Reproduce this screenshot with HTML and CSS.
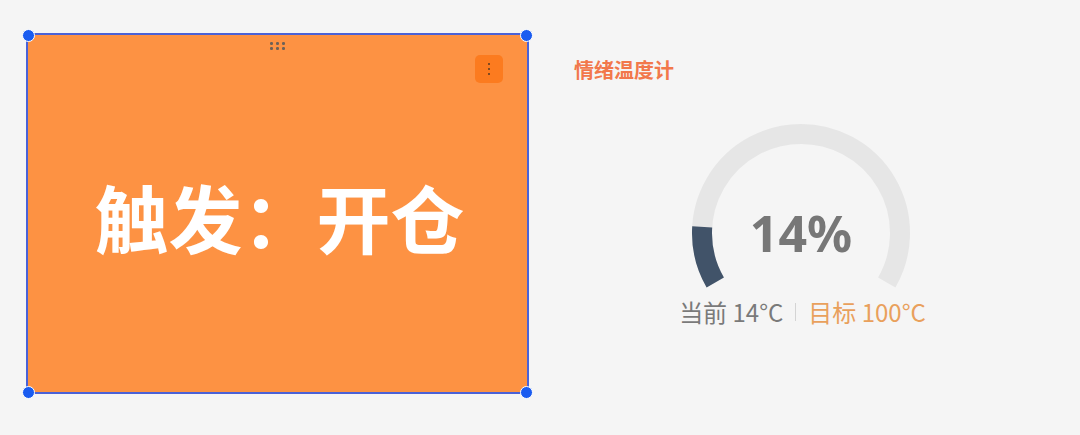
FILE: index.html
```html
<!DOCTYPE html>
<html lang="zh">
<head>
<meta charset="utf-8">
<link rel="stylesheet" href="styles.css">
</head>
<body>
<div class="page">
  <div class="card">
    <div class="drag">
      <i></i><i></i><i></i><i></i><i></i><i></i>
    </div>
    <div class="menu"><i></i><i></i><i></i></div>
    <div class="big">触发：开仓</div>
    <span class="handle tl"></span>
    <span class="handle tr"></span>
    <span class="handle bl"></span>
    <span class="handle br"></span>
  </div>
  <div class="panel">
    <div class="title">情绪温度计</div>
    <div class="gauge">
      <svg class="gauge-svg" width="240" height="185" viewBox="0 0 240 185">
        <path d="M34.26 167.5 A99 99 0 1 1 205.74 167.5" fill="none" stroke="#e6e6e6" stroke-width="20"/>
        <path d="M34.26 167.5 A99 99 0 0 1 21.2 111.8" fill="none" stroke="#415369" stroke-width="20" stroke-linejoin="round"/>
        <text x="120" y="118" class="pct" text-anchor="middle" dominant-baseline="central">14%</text>
      </svg>
      <div class="legend">
        <span class="cur">当前 14°C</span>
        <span class="sep"></span>
        <span class="tgt">目标 100°C</span>
      </div>
    </div>
  </div>
</div>
</body>
</html>
```
FILE: styles.css
```css
html, body {
  margin: 0;
  padding: 0;
  background: #f5f5f5;
  font-family: "Noto Sans", "Noto Sans CJK SC", sans-serif;
}
.page {
  display: flex;
  align-items: flex-start;
  box-sizing: border-box;
  min-height: 435px;
  padding: 33px 0 0 26px;
}
.card {
  position: relative;
  box-sizing: border-box;
  width: 503px;
  height: 361px;
  background: #fd9243;
  border: 2px solid #4a62d8;
  display: flex;
  align-items: center;
  justify-content: center;
}
.handle {
  position: absolute;
  z-index: 2;
  width: 11px;
  height: 11px;
  border-radius: 50%;
  background: #1a5cf0;
  border: 1.5px solid #fff;
}
.handle.tl { left: -6px; top: -6px; }
.handle.tr { right: -6px; top: -6px; }
.handle.bl { left: -6px; bottom: -7px; }
.handle.br { right: -6px; bottom: -7px; }
.drag {
  position: absolute;
  top: 7px;
  left: 242px;
  display: grid;
  grid-template-columns: repeat(3, 2.5px);
  column-gap: 3.5px;
  row-gap: 2.5px;
}
.drag i {
  width: 2.5px;
  height: 2.5px;
  background: #6e6158;
  border-radius: 50%;
}
.menu {
  position: absolute;
  top: 20px;
  right: 24px;
  width: 28px;
  height: 28px;
  border-radius: 5px;
  background: #fc7b1f;
  display: flex;
  flex-direction: column;
  align-items: center;
  justify-content: center;
  gap: 2.5px;
}
.menu i {
  width: 2.5px;
  height: 2.5px;
  background: #5a3a22;
  border-radius: 50%;
}
.big {
  font-family: "Noto Sans CJK SC", sans-serif;
  font-weight: 700;
  font-size: 74px;
  line-height: 1;
  color: #fff;
  padding-top: 4px;
  padding-left: 4px;
}
.panel {
  margin-left: 45px;
  display: flex;
  flex-direction: column;
}
.title {
  font-family: "Noto Sans CJK SC", sans-serif;
  font-weight: 700;
  font-size: 20px;
  line-height: 24px;
  color: #f2784b;
  margin-top: 25px;
}
.gauge {
  width: 300px;
  margin-left: 77px;
  margin-top: 33px;
  display: flex;
  flex-direction: column;
  align-items: center;
}
.gauge-svg {
  display: block;
}
.pct {
  font-family: "Noto Sans", sans-serif;
  font-weight: 700;
  font-size: 50px;
  fill: #777777;
}
.legend {
  display: flex;
  align-items: center;
  font-family: "Noto Sans CJK SC", sans-serif;
  font-size: 24px;
  line-height: 24px;
  white-space: nowrap;
  margin-left: 3px;
}
.cur { color: #7a7a7a; }
.tgt { color: #e9a05c; }
.sep {
  width: 1px;
  height: 18px;
  background: #d4d4d4;
  margin: 0 12px;
}
```
